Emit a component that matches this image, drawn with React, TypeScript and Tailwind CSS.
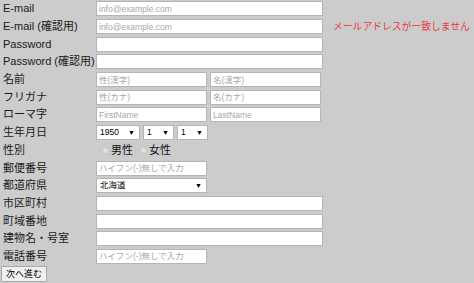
const FONT = { fontFamily: '"Liberation Sans", "Noto Sans CJK JP", sans-serif' }

const inputCls =
  'h-[15px] border border-[#b5b5b5] bg-white px-[2px] text-[8.5px] leading-none text-black placeholder:text-[#a8a8a8] outline-none'

function Row({ label, children }: { label: string; children?: React.ReactNode }) {
  return (
    <div className="flex h-[17.7px] items-center">
      <div className="w-[96px] shrink-0 whitespace-nowrap pl-[3px] text-[11px] leading-none text-[#1a1a1a]">{label}</div>
      <div className="flex items-center gap-[3px]">{children}</div>
    </div>
  )
}

function Select({ value, width }: { value: string; width: string }) {
  return (
    <div className={`flex h-[15px] items-center justify-between border border-[#b5b5b5] bg-white pl-[3px] pr-[4px] text-[8.5px] leading-none text-black ${width}`}>
      <span>{value}</span>
      <span className="text-[7px]">▼</span>
    </div>
  )
}

function Radio({ label }: { label: string }) {
  return (
    <label className="flex items-center gap-[2px] text-[11px] leading-none text-[#111]">
      <span className="h-[7px] w-[7px] rounded-full border border-[#c4c4c4] bg-[#e2e2e2]" />
      {label}
    </label>
  )
}

export default function App() {
  return (
    <div className="h-[283px] w-[474px] overflow-hidden bg-[#cccccc]" style={FONT}>
      <Row label="E-mail">
        <input className={`${inputCls} w-[227px]`} placeholder="info@example.com" />
      </Row>
      <Row label="E-mail (確認用)">
        <input className={`${inputCls} w-[227px]`} placeholder="info@example.com" />
        <span className="ml-[7px] whitespace-nowrap text-[9.8px] leading-none text-[#e8383d]">メールアドレスが一致しません</span>
      </Row>
      <Row label="Password">
        <input type="password" className={`${inputCls} w-[227px]`} />
      </Row>
      <Row label="Password (確認用)">
        <input type="password" className={`${inputCls} w-[227px]`} />
      </Row>
      <Row label="名前">
        <input className={`${inputCls} w-[111px]`} placeholder="性(漢字)" />
        <input className={`${inputCls} w-[111px]`} placeholder="名(漢字)" />
      </Row>
      <Row label="フリガナ">
        <input className={`${inputCls} w-[111px]`} placeholder="性(カナ)" />
        <input className={`${inputCls} w-[111px]`} placeholder="名(カナ)" />
      </Row>
      <Row label="ローマ字">
        <input className={`${inputCls} w-[111px]`} placeholder="FirstName" />
        <input className={`${inputCls} w-[111px]`} placeholder="LastName" />
      </Row>
      <Row label="生年月日">
        <Select value="1950" width="w-[44px]" />
        <Select value="1" width="w-[31px]" />
        <Select value="1" width="w-[31px]" />
      </Row>
      <Row label="性別">
        <div className="flex items-center gap-[7px] pl-[6px]">
          <Radio label="男性" />
          <Radio label="女性" />
        </div>
      </Row>
      <Row label="郵便番号">
        <input className={`${inputCls} w-[111px]`} placeholder="ハイフン(-)無しで入力" />
      </Row>
      <Row label="都道府県">
        <Select value="北海道" width="w-[111px]" />
      </Row>
      <Row label="市区町村">
        <input className={`${inputCls} w-[227px]`} />
      </Row>
      <Row label="町域番地">
        <input className={`${inputCls} w-[227px]`} />
      </Row>
      <Row label="建物名・号室">
        <input className={`${inputCls} w-[227px]`} />
      </Row>
      <Row label="電話番号">
        <input className={`${inputCls} w-[111px]`} placeholder="ハイフン(-)無しで入力" />
      </Row>
      <div className="flex pl-[1px] pt-[1px]">
        <button className="h-[16px] border border-[#a8a8a8] bg-[#f0f0f0] px-[4px] text-[9px] leading-none text-black">次へ進む</button>
      </div>
    </div>
  )
}
